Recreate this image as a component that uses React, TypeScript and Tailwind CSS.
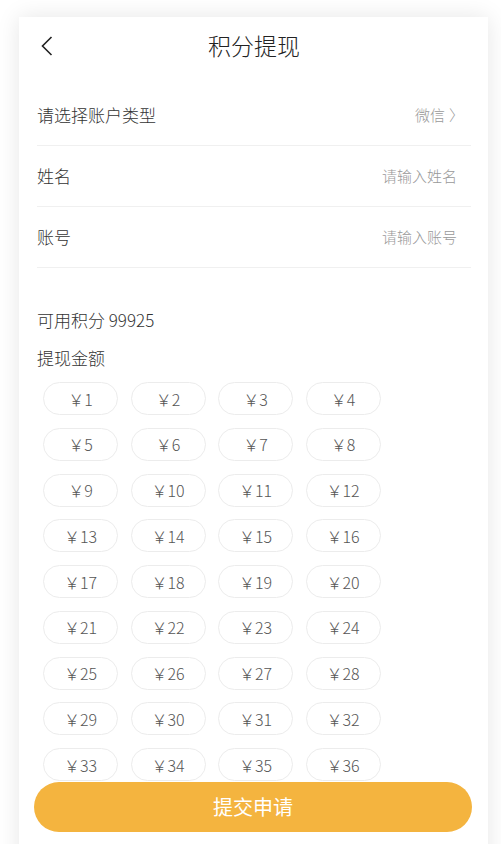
import React from "react";

const amounts = Array.from({ length: 40 }, (_, i) => i + 1);

function Row({ label, value, arrow }: { label: string; value: string; arrow?: boolean }) {
  return (
    <div className="flex h-[61px] items-center justify-between border-b border-[#f0f0f0]">
      <span className="text-[17px] font-light text-[#333]">{label}</span>
      <span
        className={`flex items-center text-[15px] font-light text-[#999] ${arrow ? "mr-[7px]" : "mr-[14px]"}`}
      >
        {value}
        {arrow && <span className="ml-[4px]">〉</span>}
      </span>
    </div>
  );
}

export default function App() {
  return (
    <div
      className="min-h-screen bg-white pt-[17px]"
      style={{ fontFamily: '"Noto Sans CJK SC", "Noto Sans", sans-serif' }}
    >
      <div className="ml-[19px] w-[469px] bg-white pb-[90px] pl-[18px] pr-[17px] shadow-[0_0_22px_rgba(0,0,0,0.1)]">
        <div className="relative flex h-[56px] items-center justify-center">
          <svg
            className="absolute left-[4px] top-[19px]"
            width="12"
            height="20"
            viewBox="0 0 12 20"
            fill="none"
          >
            <path d="M10.5 1 L1.5 10 L10.5 19" stroke="#222" strokeWidth="1.6" />
          </svg>
          <h1 className="text-[23px] font-light text-[#222]">积分提现</h1>
        </div>

        <div className="mt-[12px]">
          <Row label="请选择账户类型" value="微信" arrow />
          <Row label="姓名" value="请输入姓名" />
          <Row label="账号" value="请输入账号" />
        </div>

        <p className="mt-[39px] text-[17px] font-light leading-[26px] text-[#333]">可用积分 99925</p>
        <p className="mt-[12px] text-[17px] font-light leading-[26px] text-[#333]">提现金额</p>

        <div className="mt-[11px] grid grid-cols-[repeat(4,75px)] gap-x-[12.5px] gap-y-[12.75px] pl-[6px]">
          {amounts.map((n) => (
            <div
              key={n}
              className="flex h-[33px] items-center justify-center rounded-full border border-[#ececec] text-[16px] font-light text-[#555]"
            >
              ￥{n}
            </div>
          ))}
        </div>
      </div>

      <button className="fixed bottom-[12px] left-[34px] h-[50px] w-[438px] rounded-full bg-[#f4b43f] text-[20px] text-white">
        提交申请
      </button>
    </div>
  );
}
